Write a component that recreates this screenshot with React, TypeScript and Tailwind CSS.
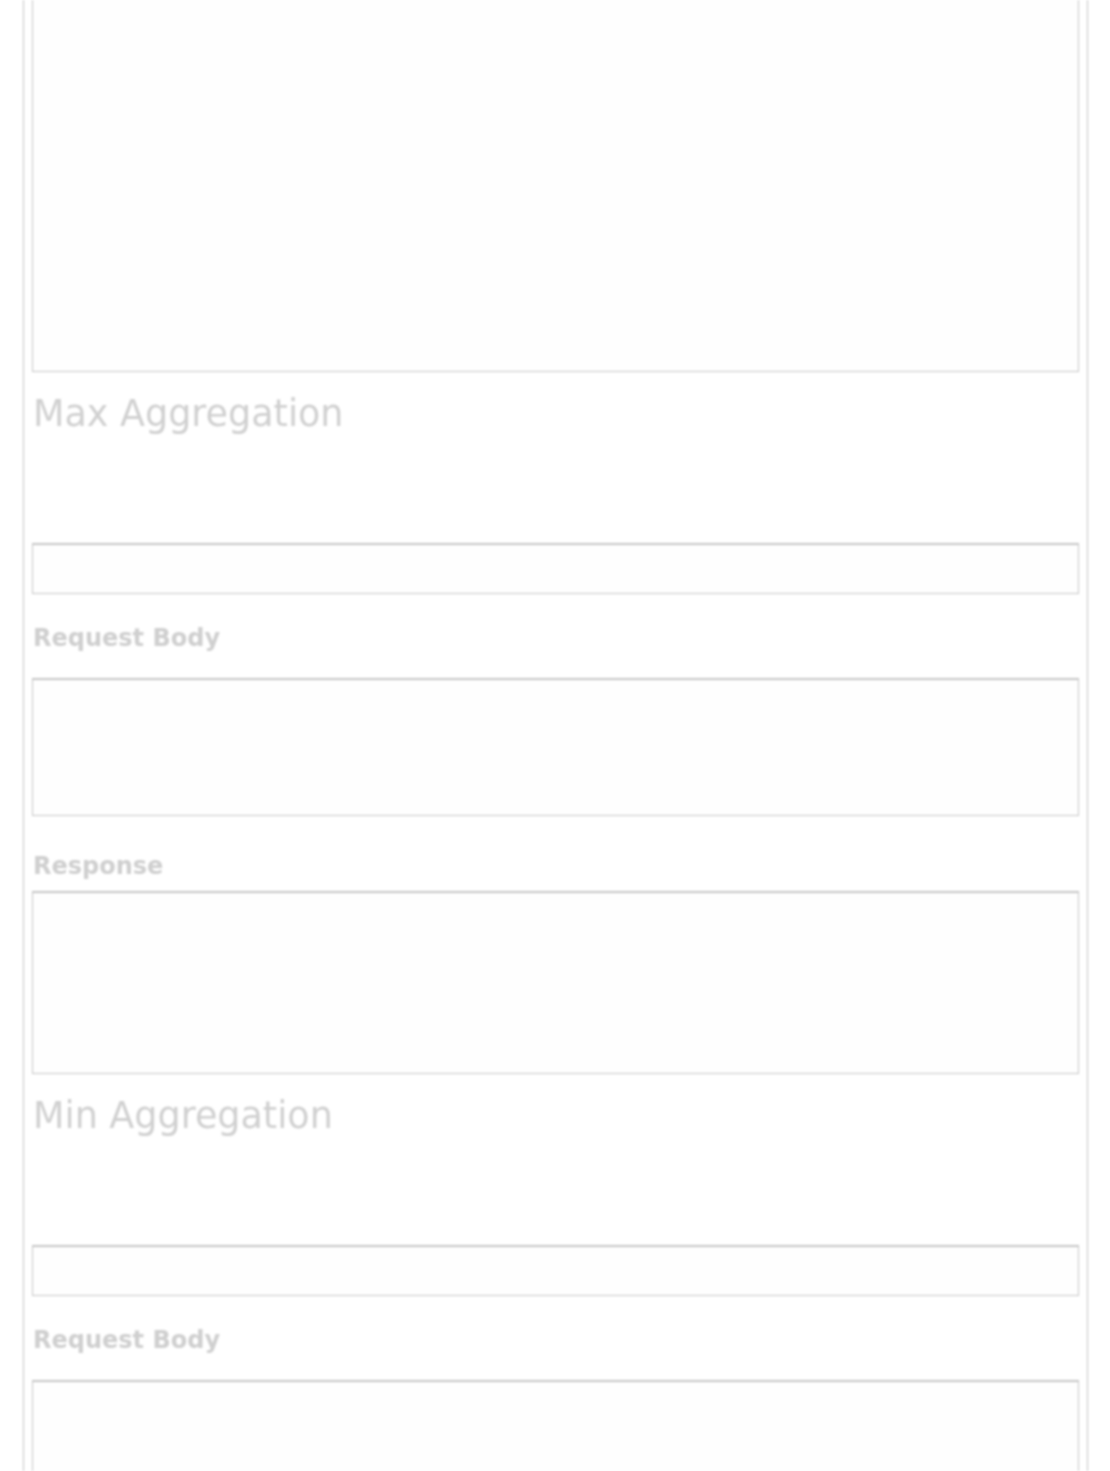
import React from "react";

const labelCls = "block h-[28px] text-[24px] leading-[28px] font-bold text-[#cfcfcf]";
const boxCls = "block w-full border border-t-2 border-[#c6c6c6] bg-[#fefefe]";

const Section = ({ title, withResponse = true }: { title: string; withResponse?: boolean }) => {
  return (
    <section className="flex flex-col">
      <h2 className="mt-[21px] h-[42px] pl-px text-[36.5px] leading-[42px] font-normal text-[#d0d0d0]">{title}</h2>
      <div className={`${boxCls} mt-[108px] h-[51px]`} />
      <label className={`${labelCls} mt-[30px] pl-px`}>Request Body</label>
      <div className={`${boxCls} mt-[26px] h-[138px]`} />
      {withResponse && (
        <>
          <label className={`${labelCls} mt-[36px] pl-px`}>Response</label>
          <div className={`${boxCls} mt-[11px] h-[183px]`} />
        </>
      )}
    </section>
  );
};

const App = () => {
  return (
    <div className="h-[1471px] bg-white overflow-hidden font-['DejaVu_Sans',Verdana,sans-serif]">
      <div className="ml-[23px] mr-[22px] h-[1471px] overflow-hidden border-x border-[#c6c6c6] px-[8px] blur-[0.8px]">
        <div className="h-[372px] w-full border-x border-b border-[#c6c6c6] bg-[#fefefe]" />
        <Section title="Max Aggregation" />
        <Section title="Min Aggregation" withResponse={false} />
      </div>
    </div>
  );
};

export default App;
